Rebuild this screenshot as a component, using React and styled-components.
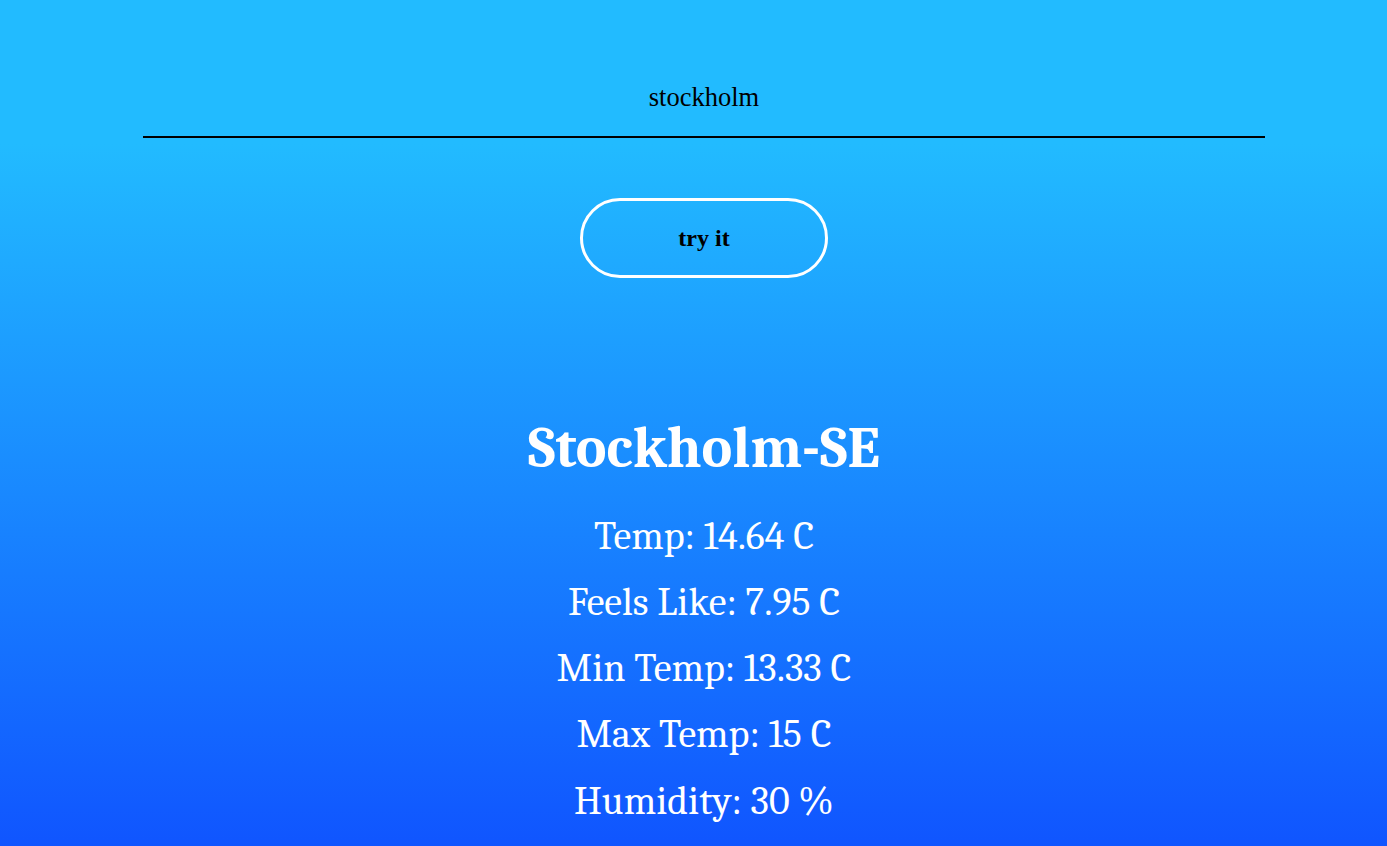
import React, { useState } from 'react';
import styled, { createGlobalStyle } from 'styled-components';

const GlobalStyle = createGlobalStyle`
  html, body {
    margin: 0;
    padding: 0;
  }
  body {
    min-height: 100vh;
    background: linear-gradient(180deg, #22bbff 0%, #22bbff 17%, #1055ff 100%);
    background-attachment: fixed;
  }
`;

const Page = styled.div`
  min-height: 100vh;
  display: flex;
  flex-direction: column;
  align-items: center;
  padding: 58px 0 0 21px;
  box-sizing: border-box;
`;

const SearchInput = styled.input`
  width: 1122px;
  height: 80px;
  box-sizing: border-box;
  border: none;
  border-bottom: 2px solid #000;
  background: transparent;
  outline: none;
  text-align: center;
  font-family: "Liberation Serif", "Times New Roman", serif;
  font-size: 26.5px;
  color: #000;
`;

const TryButton = styled.button`
  margin-top: 60px;
  width: 248px;
  height: 80px;
  border: 3px solid #fff;
  border-radius: 40px;
  background: transparent;
  font-family: "Liberation Serif", "Times New Roman", serif;
  font-weight: bold;
  font-size: 24px;
  color: #000;
  cursor: pointer;
`;

const Weather = styled.section`
  margin-top: 136px;
  display: flex;
  flex-direction: column;
  align-items: center;
  color: #fff;
  font-family: Cambria, Caladea, "Noto Serif", "Liberation Serif", serif;
`;

const City = styled.h1`
  margin: 0 0 19px;
  font-size: 58px;
  font-weight: bold;
  line-height: 1.2;
`;

const Stat = styled.p`
  margin: 0;
  font-size: 40px;
  line-height: 66.3px;
`;

const stats = [
  ['Temp', '14.64 C'],
  ['Feels Like', '7.95 C'],
  ['Min Temp', '13.33 C'],
  ['Max Temp', '15 C'],
  ['Humidity', '30 %'],
];

export default function App() {
  const [city, setCity] = useState('stockholm');
  return (
    <>
      <GlobalStyle />
      <Page>
        <SearchInput value={city} onChange={(e) => setCity(e.target.value)} />
        <TryButton>try it</TryButton>
        <Weather>
          <City>Stockholm-SE</City>
          {stats.map(([label, value]) => (
            <Stat key={label}>
              {label}: {value}
            </Stat>
          ))}
        </Weather>
      </Page>
    </>
  );
}
